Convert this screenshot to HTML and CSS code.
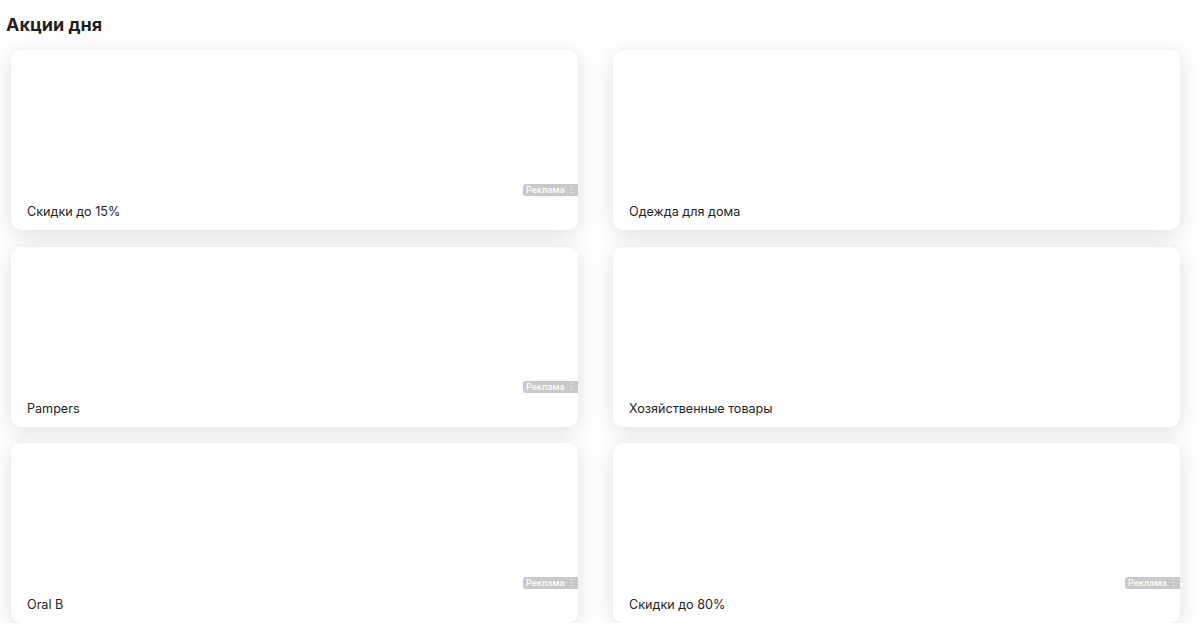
FILE: index.html
```html
<!DOCTYPE html>
<html lang="ru">
<head>
    <meta charset="UTF-8">
    <title>Акции дня</title>
    <link rel="stylesheet" href="styles.css">
</head>
<body>
    <div class="promo">
        <h2 class="promo-title">Акции дня</h2>
        <div class="promo-grid">
            <div class="promo-card">
                <span class="ad-badge">Реклама <i>⋮</i></span>
                <span class="promo-name">Скидки до 15%</span>
            </div>
            <div class="promo-card">
                <span class="promo-name">Одежда для дома</span>
            </div>
            <div class="promo-card">
                <span class="ad-badge">Реклама <i>⋮</i></span>
                <span class="promo-name">Pampers</span>
            </div>
            <div class="promo-card">
                <span class="promo-name">Хозяйственные товары</span>
            </div>
            <div class="promo-card">
                <span class="ad-badge">Реклама <i>⋮</i></span>
                <span class="promo-name">Oral B</span>
            </div>
            <div class="promo-card">
                <span class="ad-badge">Реклама <i>⋮</i></span>
                <span class="promo-name">Скидки до 80%</span>
            </div>
        </div>
    </div>
</body>
</html>
```

FILE: styles.css
```css
body {
    margin: 0;
    background: #fff;
    font-family: Inter, "Noto Sans", sans-serif;
    color: #242424;
}

.promo {
    padding: 0 20px 0 11px;
}

.promo-title {
    margin: 0 0 0 -5px;
    padding-top: 14px;
    height: 50px;
    box-sizing: border-box;
    font-size: 18px;
    font-weight: 700;
    line-height: 22px;
    color: #1f1f1f;
}

.promo-grid {
    display: grid;
    grid-template-columns: 1fr 1fr;
    column-gap: 35px;
    row-gap: 16.5px;
}

.promo-card {
    position: relative;
    height: 180px;
    background: #fff;
    border-radius: 10px;
    box-shadow: 0 4px 22px rgba(0, 0, 0, 0.13);
    display: flex;
    flex-direction: column;
    justify-content: flex-end;
    padding: 0 16px 10px;
    box-sizing: border-box;
}

.promo-name {
    font-size: 12.6px;
    line-height: 16px;
    color: #242424;
}

.ad-badge {
    position: absolute;
    right: 0;
    bottom: 34px;
    height: 12px;
    padding: 0 2px 0 3px;
    background: #c9c9c9;
    border-radius: 3px 0 0 3px;
    color: #fff;
    font-size: 9px;
    font-weight: 500;
    line-height: 12px;
}

.ad-badge i {
    font-style: normal;
}
```
